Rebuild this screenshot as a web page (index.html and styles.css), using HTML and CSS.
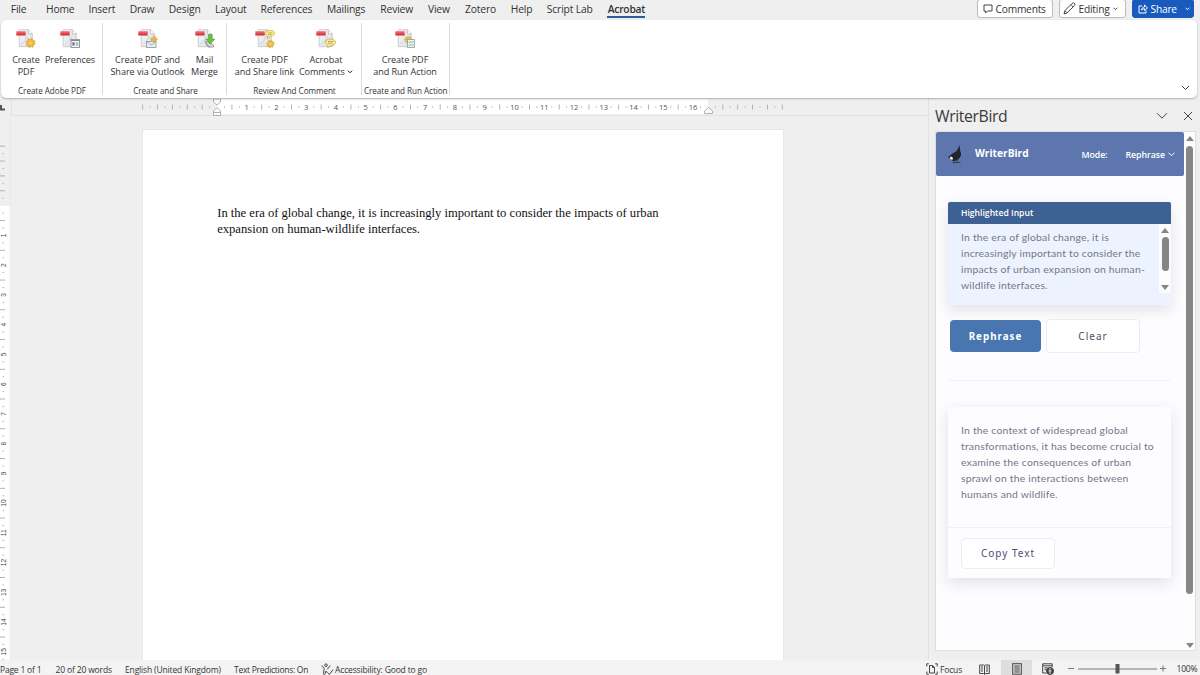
FILE: index.html
```html
<!DOCTYPE html>
<html lang="en">
<head>
<meta charset="utf-8">
<title>Document</title>
<link rel="stylesheet" href="styles.css">
</head>
<body>
<svg class="defs" width="0" height="0">
  <defs>
    <linearGradient id="sheet" x1="0" y1="0" x2="1" y2="1"><stop offset="0" stop-color="#f6f6f6"/><stop offset="1" stop-color="#dcdfe4"/></linearGradient>
    <linearGradient id="red" x1="0" y1="0" x2="0" y2="1"><stop offset="0" stop-color="#f0787c"/><stop offset="1" stop-color="#d2232c"/></linearGradient>
    <g id="pdf">
      <path d="M3.2.7h9.3l3.800 4v13H3.200z" fill="url(#sheet)" stroke="#bdbdbd" stroke-width=".7"/>
      <path d="M12.3.7v4.2h4" fill="#fff" stroke="#a9a9a9" stroke-width=".7"/>
      <path d="M5 15c3-1 5-4 5.500-8 1 4 3 5 5 5" fill="none" stroke="#cbced2" stroke-width=".8"/>
      <rect x=".3" y="2.200" width="9.400" height="4.300" fill="url(#red)"/>
    </g>
    <g id="gear">
      <circle r="3.700" fill="#f1bd49" stroke="#d99b2c" stroke-width=".6"/>
      <circle r="4.200" fill="none" stroke="#e5aa3b" stroke-width="1.500" stroke-dasharray="1.650 1.650"/>
      <circle r="1.500" fill="#f6cf6c"/>
    </g>
  </defs>
</svg>
<div class="app">
  <header class="tabs">
    <nav class="tab-list">
      <span class="tab file">File</span><span class="tab" style="width:27px">Home</span><span class="tab" style="width:26px">Insert</span><span class="tab" style="width:24px">Draw</span><span class="tab" style="width:31px">Design</span><span class="tab" style="width:31px">Layout</span><span class="tab" style="width:50px">References</span><span class="tab" style="width:39px">Mailings</span><span class="tab" style="width:32px">Review</span><span class="tab" style="width:22px">View</span><span class="tab" style="width:31px">Zotero</span><span class="tab" style="width:21px">Help</span><span class="tab" style="width:45px">Script Lab</span><span class="tab active" style="width:38px">Acrobat</span>
    </nav>
    <div class="actions">
      <button class="action comments"><svg width="10" height="10" viewBox="0 0 10 10"><path d="M1 1h8v6H4.500L2.500 9V7H1z"/></svg><span>Comments</span></button>
      <button class="action editing"><svg width="13" height="13" viewBox="0 0 13 13"><path d="M1 12l1-3.500L9.300 1.200c1.500-1.100 3.300.7 2.300 2.200L4.300 10.800zM8 2.700l2.300 2.300M2 8.800l2 2"/></svg><span>Editing</span><svg width="5" height="4" viewBox="0 0 5 4"><path d="M.5.7l2 2 2-2"/></svg></button>
      <button class="action share"><svg width="10" height="10" viewBox="0 0 10 10"><path d="M4 2H1v7h7V6.500M3.500 6c.3-2 1.300-3 3-3V1l3 2.900-3 2.600V4.700c-1.300 0-2.200.4-3 1.300z"/></svg><span>Share</span><svg class="share-more" width="5" height="4" viewBox="0 0 5 4"><path d="M.5.7l2 2 2-2"/></svg></button>
    </div>
  </header>

  <section class="ribbon">
    <div class="group g1">
      <div class="commands">
        <div class="command w44"><svg class="ico" viewBox="0 0 20 20"><use href="#pdf"/><use href="#gear" x="14.500" y="14"/></svg><span>Create<br>PDF</span></div>
        <div class="command w44"><svg class="ico" viewBox="0 0 20 20"><use href="#pdf"/><rect x="11" y="10.500" width="8.500" height="8" fill="#f5f5f5" stroke="#8b9096" stroke-width=".9"/><path d="M11 11.500h8.500M15.800 14h2.500M15.800 16h2.500" stroke="#868b91"/><rect x="12.300" y="13.300" width="2.400" height="3.200" fill="#777d84"/></svg><span>Preferences</span></div>
      </div>
      <div class="caption">Create Adobe PDF</div>
    </div>
    <div class="group g2">
      <div class="commands">
        <div class="command w81"><svg class="ico" viewBox="0 0 20 20"><use href="#pdf"/><rect x="8.500" y="12.500" width="9.500" height="6" fill="#e9ecef" stroke="#8d949b" stroke-width=".8"/><path d="M8.500 12.500l4.700 3.400 4.800-3.400" fill="none" stroke="#8d949b" stroke-width=".7"/><path d="M13 9c1-1 2-1.200 3.400-1V6.500l3.300 4-3.300 3V11.300H13z" fill="#efb645" stroke="#cf982f" stroke-width=".4"/></svg><span>Create PDF and<br>Share via Outlook</span></div>
        <div class="command w33"><svg class="ico" viewBox="0 0 20 20"><use href="#pdf"/><path d="M10 12l8.500 4v2H13zM10 14l5 4" fill="#ddd" stroke="#85898d" stroke-width=".8"/><path d="M13.300 5.500h4v4.600h2.600l-4.600 5-4.500-5h2.500z" fill="#68bf3f" stroke="#499a2b" stroke-width=".5"/></svg><span>Mail<br>Merge</span></div>
      </div>
      <div class="caption">Create and Share</div>
    </div>
    <div class="group g3">
      <div class="commands">
        <div class="command w61"><svg class="ico" viewBox="0 0 20 20"><use href="#pdf"/><path d="M11.500 2c3-.8 7-.8 8 1 .8 2-.5 4-4.200 4.300L12.500 9.500V7c-2.500-1-2.700-4-1-5z" fill="#faec8e" stroke="#c9ab3d" stroke-width=".7"/><path d="M13 3.900h4.500M13 5.500h3.500" stroke="#a08e3e" stroke-width=".6"/><use href="#gear" transform="translate(15.500 15) scale(.82)"/></svg><span>Create PDF<br>and Share link</span></div>
        <div class="command w62"><svg class="ico" viewBox="0 0 20 20"><use href="#pdf"/><path d="M14.500 10c6.700 0 6.700 6.500.5 6.500L11.700 18.600v-2.700c-4-1.300-3-5.900 2.800-5.900z" fill="#fae99a" stroke="#c6a43b" stroke-width=".7"/><path d="M12 12.500h5.500M12 14.200h4.500" stroke="#a08e3e" stroke-width=".7"/></svg><span>Acrobat<br>Comments <svg class="caret" width="6" height="4" viewBox="0 0 6 4"><path d="M.7.7l2.300 2 2.300-2"/></svg></span></div>
      </div>
      <div class="caption">Review And Comment</div>
    </div>
    <div class="group g4">
      <div class="commands">
        <div class="command w80"><svg class="ico" viewBox="0 0 20 20"><use href="#pdf"/><use href="#gear" transform="translate(13.500 11) scale(.8)"/><rect x="12.500" y="10.500" width="7" height="8" fill="#eef5f4" stroke="#7fa69a" stroke-width=".8"/><path d="M13.700 13l.8.800 1.300-1.600M13.700 16l.8.800 1.300-1.600" fill="none" stroke="#3f9c4e" stroke-width=".8"/><path d="M16.500 13h2M16.500 16h2" stroke="#628ca8" stroke-width=".8"/></svg><span>Create PDF<br>and Run Action</span></div>
      </div>
      <div class="caption">Create and Run Action</div>
    </div>
    <svg class="collapse" width="9" height="6" viewBox="0 0 9 6"><path d="M1 1l3.500 3.500L8 1"/></svg>
  </section>

  <main class="workspace">
    <section class="editor">
      <div class="top-ruler">
        <div class="tab-stop"><svg width="11" height="17" viewBox="0 0 11 17"><path d="M1 6v4.500h4" fill="none" stroke="#555" stroke-width="2"/></svg></div>
        <svg id="hruler" width="917" height="17" viewBox="11 0 917 17"></svg>
      </div>
      <div class="canvas">
        <svg id="vruler" width="11" height="544" viewBox="0 116 11 544"></svg>
        <div class="scroll">
          <article class="page">
            <p>In the era of global change, it is increasingly important to consider the impacts of urban<br>expansion on human-wildlife interfaces.</p>
          </article>
        </div>
      </div>
    </section>

    <aside class="pane">
      <div class="pane-title"><h2>WriterBird</h2>
        <svg class="pane-more" width="12" height="8" viewBox="0 0 12 8"><path d="M1 1.200l5 5 5-5"/></svg>
        <svg class="pane-close" width="10" height="10" viewBox="0 0 10 10"><path d="M1 1l8 8M9 1L1 9"/></svg>
      </div>
      <div class="addin">
        <div class="addin-body">
          <div class="brandbar">
            <svg class="bird" width="17" height="21" viewBox="0 0 17 21"><path d="M12.500.8c.2 2.500.3 4.800 1 6.900 1.700 3.300-.8 7.700-5 9-2.500.8-4.600-.2-5.200-2.200L.7 13.200 3 11.800C4 9.500 7 9 9 7.400 10.600 5.500 11.800 3.400 12.500.8z" fill="#23242c"/><path d="M2.800 13.200c1.300-.7 2.600-.2 3 .8.400 1-.3 2-1.200 1.800-1-.3-1.600-.9-1.800-2.600z" fill="#f3eee7"/><path d="M7 16.500v2M10 16v2.300M5.500 18.700l8-.3" stroke="#343848" stroke-width=".9" fill="none"/></svg>
            <span class="brand">WriterBird</span>
            <span class="mode">Mode:</span>
            <span class="mode-value">Rephrase</span>
            <svg class="mode-caret" width="7" height="5" viewBox="0 0 7 5"><path d="M.5.7l3 3 3-3"/></svg>
          </div>
          <div class="content">
            <section class="card input-card">
              <h3>Highlighted Input</h3>
              <div class="input-area">
                <p>In the era of global change, it is<br>increasingly important to consider the<br>impacts of urban expansion on human-<br>wildlife interfaces.</p>
                <div class="mini-scroll"><i class="up"></i><i class="thumb"></i><i class="down"></i></div>
              </div>
            </section>
            <div class="buttons"><button class="btn primary">Rephrase</button><button class="btn clear">Clear</button></div>
            <hr>
            <section class="card output-card">
              <p>In the context of widespread global<br>transformations, it has become crucial to<br>examine the consequences of urban<br>sprawl on the interactions between<br>humans and wildlife.</p>
              <div class="card-foot"><button class="btn copy">Copy Text</button></div>
            </section>
          </div>
        </div>
        <div class="scrollbar"><i class="up"></i><i class="thumb"></i><i class="down"></i></div>
      </div>
    </aside>
  </main>

  <footer class="status">
    <span class="s-page">Page 1 of 1</span><span class="s-words">20 of 20 words</span><span class="s-lang">English (United Kingdom)</span><span class="s-pred">Text Predictions: On</span>
    <svg class="s-acc" width="13" height="13" viewBox="0 0 13 13"><circle cx="5" cy="2.200" r="1.300"/><path d="M1 2.500c-.5 1.800 2.200 1.500 2.200 2.800L2.500 10.500c0 1.500 1.500 1.500 1.700 0L5 8l1 1.500M9 2.500c.5 1.800-2.200 1.500-2.200 2.800v1M6.500 9.500l2 2L12 6.500"/></svg>
    <span class="s-good">Accessibility: Good to go</span>
    <div class="views">
      <svg class="v-focus" width="12" height="12" viewBox="0 0 12 12"><path d="M3.500 2.500h3l2 2V10h-5zM6.500 2.500v2h2M.8 3.500V.8h2M9.200.8h2v2.700M.8 8.500v2.700h2M9.200 11.200h2V8.500"/></svg>
      <span class="s-focus">Focus</span>
      <svg class="v-read" width="11" height="11" viewBox="0 0 11 11"><path d="M5.500 1.700L4.500 1H.7v8.500h3.800l1 .8 1-.8h3.800V1H6.500zM5.500 1.700v8.500M2 3h2M2 5h2M2 7h2M7 3h2M7 5h2M7 7h2"/></svg>
      <div class="v-print"><svg width="10" height="12" viewBox="0 0 10 12"><rect x=".7" y=".7" width="8.600" height="10.500"/><path d="M2.300 3h5.400M2.300 5h5.400M2.300 7h5.400M2.300 9h5.400"/></svg></div>
      <svg class="v-web" width="12" height="12" viewBox="0 0 12 12"><path d="M4.500 10H.7V.8h9.500V4M.7 2.800h9.500M2.500 4.800h3M2.500 6.700h2"/><circle cx="8" cy="8" r="3.500" fill="#444"/><path d="M8 5v6M6.500 8h3" stroke="#ddd"/></svg>
      <svg class="zoom" width="98" height="12" viewBox="0 0 98 12"><path d="M0 5.500h6M92 5.500h6M95 2.500v6M10 6h79"/><rect x="47.500" y="1" width="4" height="9.500"/></svg>
      <span class="percent">100%</span>
    </div>
  </footer>
</div>
<script src="rulers.js"></script>
</body>
</html>
```
FILE: styles.css
```css
* { box-sizing: border-box; }
body { margin: 0; overflow: hidden; background: #f0f0f0; font-family: "Open Sans", "Noto Sans", sans-serif; color: #333; }
button { font-family: inherit; padding: 0; }
h2, h3, p { margin: 0; font-weight: normal; }
svg { flex: none; fill: none; stroke: #444; }
.defs { position: absolute; }
.app { width: 1200px; height: 675px; display: flex; flex-direction: column; background: #efefef; overflow: hidden; }

.tabs { height: 20px; display: flex; justify-content: space-between; }
.tab-list { display: flex; gap: 15.150px; padding-left: 10.600px; }
.tab { display: flex; justify-content: center; height: 17.500px; white-space: nowrap; font-size: 10.300px; line-height: 19px; letter-spacing: -.15px; }
.tab.file { width: 16px; margin-right: 5px; }
.tab.active { font-weight: 600; letter-spacing: -.25px; border-bottom: 2px solid #2f5aa3; }
.actions { display: flex; gap: 6px; padding-right: 6px; }
.action { display: flex; align-items: center; height: 19px; margin-top: -1px; padding-left: 5px; border: 1px solid #bcbcbc; border-radius: 3px; background: #fff; font-size: 10.200px; letter-spacing: -.2px; color: #333; white-space: nowrap; }
.action span { padding-left: 2.500px; }
.comments { width: 76px; }
.editing { width: 67px; padding-left: 3px; }
.editing span { padding-right: 3px; }
.share { width: 62px; padding-left: 5px; background: #185abd; border-color: #185abd; color: #fff; }
.share svg { stroke: #fff; }
.share-more { margin-left: 8px; }

.ribbon { position: relative; z-index: 2; height: 78px; margin: 0 3px 0 1px; display: flex; background: #fff; border-radius: 5px; box-shadow: 0 1px 2px rgba(0,0,0,.28); }
.group { height: 72px; margin-top: 3px; border-right: 1px solid #dcdcdc; display: flex; flex-direction: column; }
.g1 { width: 102px; padding-left: 3px; }
.g2 { width: 124px; padding-left: 4px; }
.g3 { width: 135px; padding-left: 7px; }
.g4 { width: 87.500px; padding-left: 3px; }
.commands { flex: none; display: flex; height: 62px; }
.command { display: flex; flex-direction: column; align-items: center; text-align: center; white-space: nowrap; padding-top: 6px; font-size: 9.100px; line-height: 12.500px; letter-spacing: -.05px; }
.command > span { margin-top: 4.500px; }
.w44 { width: 44px; } .w81 { width: 81px; } .w33 { width: 33px; } .w61 { width: 61px; } .w62 { width: 62px; } .w80 { width: 80px; }
.ico { width: 20px; height: 20px; stroke: none; }
.caret { vertical-align: 1px; stroke: #333; }
.caption { flex: none; font-size: 8.150px; line-height: 12px; text-align: center; white-space: nowrap; letter-spacing: -.05px; margin-left: -2px; }
.g3 .caption { margin-left: -6px; }
.collapse { margin: 65px 7px 0 auto; }

.workspace { flex: 1; display: flex; height: 562px; }
.editor { width: 928px; display: flex; flex-direction: column; margin-top: 1px; }
.top-ruler { height: 17px; display: flex; }
.tab-stop { width: 11px; }
.canvas { flex: 1; display: flex; }
#hruler, #vruler { stroke: none; font-size: 7.500px; }
#vruler { font-family: "Liberation Sans", sans-serif; font-size: 6.600px; }
.scroll { flex: 1; padding: 13px 0 0 131px; }
.page { width: 642px; height: 531px; border: 1px solid #e8e8e8; border-bottom: 0; background: #fff; padding: 75px 0 0 74.200px; font: 12.600px/16px "Liberation Serif", serif; color: #111; white-space: nowrap; }

.pane { flex: 1; border-left: 1px solid #e2e2e2; padding: 1px 4px 0 6px; }
.pane-title { height: 32px; display: flex; align-items: center; padding: 1px 3px 0 0; }
.pane-title h2 { flex: 1; font-size: 15.800px; letter-spacing: -.4px; line-height: 32px; color: #3b3b3b; }
.pane-more { margin-right: 15px; }
.addin { height: 520px; display: flex; border: 1px solid #dedede; background: #fdfdff; }
.addin-body { width: 248px; }
.brandbar { width: 247.500px; height: 44px; display: flex; align-items: center; padding: 1px 8px 0 11px; border-radius: 2px; background: #5d76ad; color: #fff; font-weight: 600; font-size: 8.800px; white-space: nowrap; }
.bird { stroke: none; }
.brand { width: 117.500px; padding: 0 0 3px 11px; font-size: 10.200px; font-weight: 700; }
.mode { width: 44px; letter-spacing: -.1px; }
.mode-value { width: 42px; letter-spacing: -.05px; }
.mode-caret { stroke: #fff; }
.content { padding: 26px 13px 0 12px; }
.card { box-shadow: 0 5px 14px rgba(55,60,100,.14); }
.card p { font-family: Lato, sans-serif; font-size: 10.400px; letter-spacing: .2px; line-height: 15.900px; color: #747787; white-space: nowrap; }
.input-card { height: 103px; border-radius: 2px; background: #edf2ff; }
.input-card h3 { height: 22px; padding-left: 13px; border-radius: 2px 2px 0 0; background: #3d6193; color: #fff; font-size: 8.600px; font-weight: 600; line-height: 23.500px; }
.input-area { display: flex; justify-content: space-between; }
.input-area p { padding: 6.300px 0 0 13px; }
.mini-scroll { width: 12px; height: 69px; background: #fcfcfd; display: flex; flex-direction: column; align-items: center; padding: 4px 0 3px; }
.mini-scroll .thumb { width: 7px; height: 34px; margin-top: 4px; border-radius: 4px; background: #858585; }
.up, .down { border: 4px solid transparent; width: 0; height: 0; }
.up { border-bottom: 5px solid #858585; border-top: 0; }
.down { border-top: 5px solid #858585; border-bottom: 0; margin-top: auto; }
.buttons { display: flex; align-items: center; gap: 5px; padding: 14px 0 0 2px; }
.btn { height: 34px; border: 1px solid #ececf3; border-radius: 4px; background: #fff; color: #4e506d; font-size: 10px; letter-spacing: 1px; font-family: "Noto Sans", sans-serif; }
.primary { width: 91px; height: 32px; background: #4975b1; border: 0; color: #fff; font-weight: 700; font-size: 9.800px; }
.clear { width: 94px; }
hr { height: 1px; border: 0; margin: 27px 0 26px; background: #f1f1f6; }
.output-card { height: 171px; background: #fdfdff; }
.output-card p { height: 120px; padding: 16px 0 0 13px; }
.card-foot { border-top: 1px solid #f0f0f5; padding: 10px 13px; }
.copy { width: 94px; height: 31px; display: block; padding-bottom: 1px; }
.scrollbar { width: 11px; display: flex; flex-direction: column; align-items: center; padding: 4px 0 2px; }
.scrollbar .thumb { width: 7px; height: 448px; margin-top: 5px; border-radius: 4px; background: #878787; }

.status { height: 15px; display: flex; align-items: center; background: #f3f3f3; font-size: 8.500px; line-height: 15px; letter-spacing: -.15px; white-space: nowrap; padding-top: 3px; overflow: hidden; }
.status > span, .views > span { flex: none; }
.s-page { width: 55.500px; letter-spacing: -.2px; }
.s-words { width: 69.500px; }
.s-lang { width: 109px; }
.s-pred { width: 87px; letter-spacing: -.28px; }
.s-good { padding-left: 1px; }
.views { display: flex; align-items: center; margin-left: auto; width: 274px; }
.s-focus { width: 41px; padding-left: 2px; }
.v-read { margin-right: 11px; }
.v-print { width: 31px; height: 15px; margin: -3px 10px 0 0; display: flex; justify-content: center; padding-top: 3px; background: #dedede; }
.zoom { margin: -1px 10.500px 0 14px; stroke: #777; }
.zoom rect { fill: #555; stroke: none; }
.percent { font-size: 8.600px; letter-spacing: -.25px; }
```
FILE: rulers.js
```javascript
const NS = "http://www.w3.org/2000/svg";
function add(parent, name, attrs, text) {
  const el = document.createElementNS(NS, name);
  for (const key in attrs) el.setAttribute(key, attrs[key]);
  if (text !== undefined) el.textContent = text;
  parent.appendChild(el);
}

const unit = 29.75;
const h = document.getElementById("hruler");
add(h, "rect", { x: 217, y: 0, width: 491, height: 15, fill: "#fff" });
add(h, "path", { d: "M11 16.500H928M11.500 0V17", stroke: "#e2e2e2", fill: "none" });
for (let q = -10; q <= 76; q++) {
  const x = 217 + q * unit / 4;
  if (q === 0 || q === 66) continue;
  if (q > 0 && q < 66 && q % 4 === 0) {
    add(h, "text", { x, y: 10.5, "text-anchor": "middle", fill: "#555" }, q / 4);
  } else {
    const len = q % 2 === 0 ? 5 : 1.4;
    add(h, "rect", { x: x - .4, y: 8 - len / 2, width: .9, height: len, fill: "#aaa" });
  }
}
const marker = { fill: "#fafafa", stroke: "#a0a0a0", "stroke-width": .8 };
add(h, "path", { d: "M213.500 0h7v3l-3.500 3-3.500-3z", ...marker });
add(h, "path", { d: "M213.500 16.500v-4.500l3.500-3.500 3.500 3.500v4.500zM213.500 13.500h7", ...marker });
add(h, "path", { d: "M704.500 14.500v-2.500l4-3.500 4 3.500v2.500z", ...marker });

const v = document.getElementById("vruler");
add(v, "rect", { x: 0, y: 206, width: 9.5, height: 454, fill: "#fff" });
add(v, "path", { d: "M11 116V206", stroke: "#e2e2e2", fill: "none" });
for (let q = -8; q <= 61; q++) {
  const y = 205.6 + q * unit / 4;
  if (q === 0) continue;
  if (q > 0 && q % 4 === 0) {
    add(v, "text", { transform: `translate(6.2 ${y}) rotate(-90)`, "text-anchor": "middle", fill: "#444" }, q / 4);
  } else {
    const len = q % 2 === 0 ? 5 : 1.4;
    add(v, "rect", { x: q % 2 === 0 ? 0 : 2.6, y: y - .4, width: len, height: .9, fill: "#aaa" });
  }
}
```
